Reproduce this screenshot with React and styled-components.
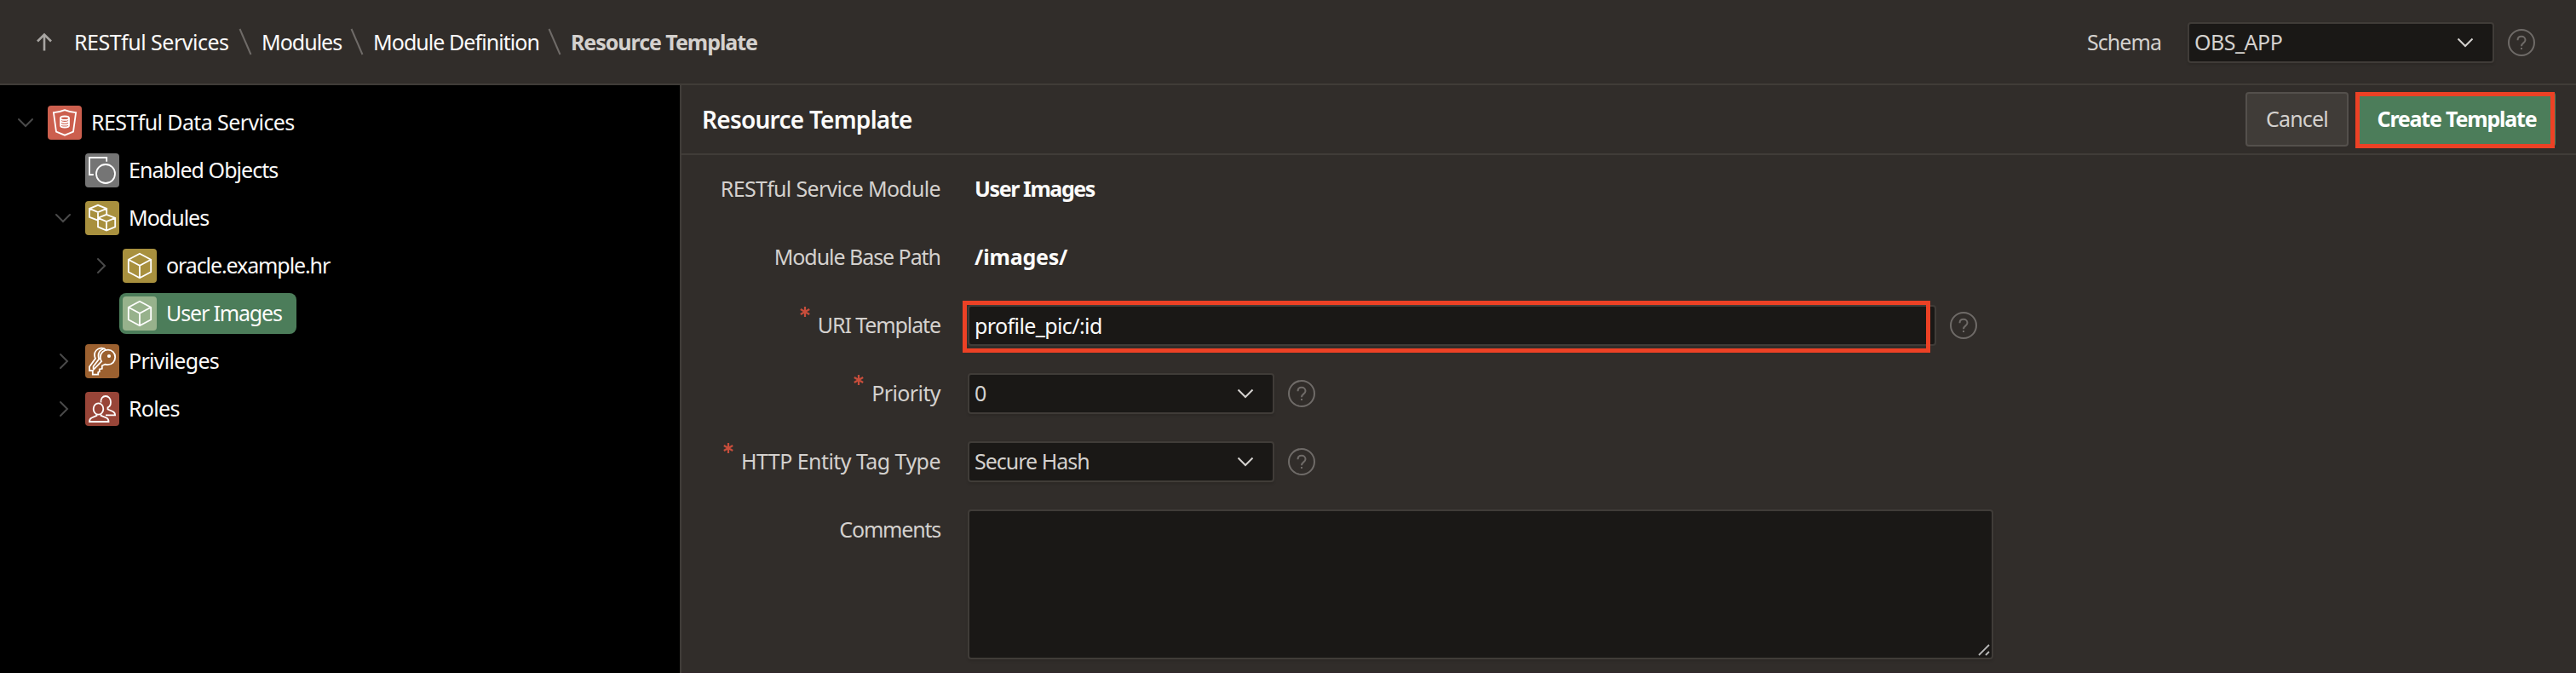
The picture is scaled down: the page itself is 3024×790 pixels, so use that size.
import React from "react";
import styled, { createGlobalStyle, css } from "styled-components";

const c = {
  bg: "#312d2a",
  line: "#403c38",
  field: "#1a1816",
  fieldLine: "#403c38",
  text: "#fcfbfa",
  muted: "#d4d1ce",
  dim: "#6f6b68",
  green: "#4c7d5a",
  red: "#ec4125",
};

const GlobalStyle = createGlobalStyle`
  * { box-sizing: border-box; }
  body {
    margin: 0;
    background: ${c.bg};
    color: ${c.text};
    font-family: "Noto Sans", "Open Sans", sans-serif;
    font-size: 25px;
    line-height: 40px;
  }
`;

const Page = styled.div`
  display: flex;
  flex-direction: column;
  width: 3024px;
  height: 790px;
  overflow: hidden;
`;

const TopBar = styled.header`
  display: flex;
  align-items: center;
  justify-content: space-between;
  flex: none;
  height: 100px;
  padding: 0 48px 0 40px;
  border-bottom: 2px solid ${c.line};
`;

const Crumbs = styled.nav`
  display: flex;
  align-items: center;
`;

const Text = styled.span`
  white-space: nowrap;
  letter-spacing: ${(p) => p.$ls || 0}px;
`;

const Crumb = styled(Text)`
  width: ${(p) => p.$w}px;
  ${(p) =>
    p.$current &&
    css`
      color: ${c.muted};
      font-weight: 700;
    `}
`;

const UpLink = styled.span`
  display: flex;
  width: 47px;
`;

const Separator = styled.svg`
  flex: none;
  width: 16px;
  height: 32px;
  margin: 0 11px;
`;

const SchemaPicker = styled.div`
  display: flex;
  align-items: center;
  padding-top: 2px;
`;

const SchemaLabel = styled(Text)`
  width: 118px;
  padding-bottom: 2px;
  color: ${c.muted};
`;

const SelectBox = styled.div`
  display: flex;
  align-items: center;
  justify-content: space-between;
  width: 360px;
  height: 48px;
  padding: 0 22px 0 6px;
  margin-right: 16px;
  color: ${c.muted};
  background: ${c.field};
  border: 2px solid ${c.fieldLine};
  border-radius: 4px;
  box-shadow: 0 2px 3px rgba(0, 0, 0, 0.12);

  ${Text} {
    padding-bottom: 2px;
  }
`;

const Body = styled.div`
  display: flex;
  flex: 1;
  min-height: 0;
`;

const Sidebar = styled.aside`
  flex: none;
  width: 800px;
  padding-top: 20px;
  background: #000;
  border-right: 2px solid ${c.line};
`;

const TreeRow = styled.div`
  display: flex;
  align-items: center;
  height: 48px;
  margin-bottom: 8px;
  padding-left: ${(p) => 8 + p.$level * 44}px;
`;

const Toggle = styled.span`
  display: flex;
  justify-content: center;
  width: 44px;
`;

const Node = styled.span`
  display: flex;
  align-items: center;
  height: 48px;
  padding: 0 17px 0 4px;
  border-radius: 8px;
  background: ${(p) => (p.$selected ? c.green : "transparent")};

  ${Text} {
    padding-bottom: 2px;
  }
`;

const Tile = styled.svg`
  width: 40px;
  height: 40px;
  margin-right: 11px;
  border-radius: 4px;
  background: ${(p) => p.$color};
  fill: none;
  stroke: #fff;
  stroke-width: 1.8;
`;

const Main = styled.main`
  flex: 1;
  border-bottom: 1px solid #31272a;
`;

const RegionHeader = styled.div`
  display: flex;
  align-items: center;
  justify-content: space-between;
  height: 82px;
  padding: 0 24px 0 24px;
  border-bottom: 2px solid ${c.line};
`;

const Title = styled.h1`
  margin: 0;
  font-size: 28px;
  font-weight: 600;
  letter-spacing: ${(p) => p.$ls}px;
`;

const Actions = styled.div`
  display: flex;
  align-items: center;
`;

const Button = styled.button`
  display: block;
  height: 64px;
  width: ${(p) => p.$w}px;
  padding: 0 0 2px;
  font: inherit;
  font-weight: ${(p) => (p.$hot ? 700 : 400)};
  letter-spacing: ${(p) => p.$ls}px;
  white-space: nowrap;
  color: ${(p) => (p.$hot ? "#fff" : c.muted)};
  background: ${(p) => (p.$hot ? c.green : "#403c38")};
  border: ${(p) => (p.$hot ? "0" : "2px solid #54504c")};
  border-radius: 4px;
`;

const Highlight = styled.div`
  position: absolute;
  inset: ${(p) => p.$inset};
  border: 5px solid ${c.red};
  pointer-events: none;
`;

const Marked = styled.div`
  position: relative;
  margin-left: ${(p) => p.$gap || 0}px;
  margin-right: ${(p) => p.$after || 0}px;
`;

const Form = styled.div`
  display: flex;
  flex-direction: column;
  gap: 32px;
  padding-top: 16px;
`;

const FormRow = styled.div`
  display: flex;
  align-items: center;
  height: ${(p) => p.$h || 48}px;
`;

const FieldLabel = styled(Text)`
  display: flex;
  align-self: flex-start;
  justify-content: flex-end;
  width: 304px;
  height: 48px;
  margin-right: 32px;
  line-height: 46px;
  color: ${c.muted};
`;

const Required = styled.svg`
  width: 14px;
  height: 14px;
  margin: 1px 8px 0 0;
  stroke: #c74d3b;
  stroke-width: 2.2;
`;

const Value = styled(Text)`
  padding: 0 0 2px 8px;
  font-weight: 700;
`;

const Input = styled.div`
  width: 1137px;
  height: 48px;
  padding-left: 6px;
  line-height: 44px;
  letter-spacing: ${(p) => p.$ls}px;
  background: ${c.field};
  border: 2px solid ${c.fieldLine};
  border-radius: 4px;
`;

const TextArea = styled.div`
  display: flex;
  align-items: flex-end;
  justify-content: flex-end;
  width: 1204px;
  height: 176px;
  padding: 2px;
  background: ${c.field};
  border: 2px solid ${c.fieldLine};
  border-radius: 4px;
  box-shadow: 0 2px 3px rgba(0, 0, 0, 0.12);
`;

const Slash = () => (
  <Separator viewBox="0 0 16 32">
    <path d="M1.5 1L14.5 31" stroke={c.dim} strokeWidth="2" />
  </Separator>
);

const Help = () => (
  <svg width="32" height="32" viewBox="0 0 32 32" fill="none" stroke={c.dim} strokeWidth="2">
    <circle cx="16" cy="16" r="15" />
    <path d="M11.5 13.2c0-2.800 2-4.400 4.500-4.400s4.500 1.600 4.500 4.200c0 3.500-4.500 3.300-4.500 7.200" />
    <path d="M16 22v2" />
  </svg>
);

const Chevron = () => (
  <svg width="20" height="12" viewBox="0 0 20 12" fill="none" stroke={c.muted} strokeWidth="2">
    <path d="M1.500 1.500L10 10l8.500-8.500" />
  </svg>
);

const TreeChevron = ({ open }) => (
  <svg width="20" height="20" viewBox="0 0 20 20" fill="none" stroke="#4a4a4a" strokeWidth="2" strokeLinecap="round">
    <path d={open ? "M2 6l8 8 8-8" : "M7 2l8 8-8 8"} />
  </svg>
);

const Select = ({ children, ls }) => (
  <SelectBox>
    <Text $ls={ls}>{children}</Text>
    <Chevron />
  </SelectBox>
);

const cube = "M20 5.700L33.200 12.700V27.300L20 34.300L6.800 27.300V12.700ZM6.800 12.700L20 19.800L33.200 12.700M20 19.800V34.300";

const icons = {
  rest: (
    <>
      <path d="M6.900 8.200C12 8 16 6.800 20 5.200c4 1.600 8 2.800 13.100 3L30 30.500l-10 4.200-10-4.200z" />
      <ellipse cx="20" cy="14.700" rx="5" ry="2.200" />
      <path d="M15 14.700v8.500c0 1.300 2.200 2.300 5 2.300s5-1 5-2.300v-8.500M15 17.600c0 1.300 2.200 2.200 5 2.200s5-.9 5-2.200M15 20.500c0 1.300 2.200 2.200 5 2.200s5-.9 5-2.200" />
    </>
  ),
  objects: (
    <>
      <path d="M9.800 25H5V5H25.200V9.800" />
      <circle cx="24" cy="24" r="11" />
    </>
  ),
  modules: (
    <>
      <path d="M14.800 22.600L5 18.800V8.800L15 4.800L25.200 8.800V15M5 8.800L15 13L25.200 8.800M15 13V19" />
      <path d="M25 15.800L35.200 19.800V30.300L25 34.600L15 30.300V19.800ZM15 19.800L25 24L35.200 19.800M25 24V34.600" />
    </>
  ),
  cube: <path d={cube} />,
  keys: (
    <>
      <path d="M26.800 6.700c4.800 0 8.400 3.500 8.400 8.500s-3.600 8.900-8.800 8.900c-1.200 0-2.200-.2-3.200-.5l-3.400 1.600v3.600l-3 .6v3l-1.600.6v2.600H8.800v-4.600l10.400-10.800c-1-1.400-1.400-3-1.400-4.900 0-5 4-8.600 9-8.600z" />
      <path d="M24.500 6.800C22.500 4.900 20.500 4.400 18.500 4.700 14 5.300 11 8.600 11 12.800c0 1.400.4 2.800 1 4L5 26.500V31h4M21.500 5.500c-3.500 1.200-6 4-6 8 0 1.600.3 2.800.8 3.900L9.600 26v3" />
      <circle cx="28" cy="14" r="1.200" fill="#fff" />
    </>
  ),
  people: (
    <>
      <path d="M18.500 12.500C18 8 20.500 5 24 5s6 3 6 7c0 3-1.500 5.500-3.500 6.300v2.200l6 2.500c1.600.8 2.600 2 2.600 4.300H24" />
      <ellipse cx="15.500" cy="20" rx="5.800" ry="6.700" />
      <path d="M13.500 26.300v1.500L7.500 30.500c-1.500.7-2.500 1.800-2.500 4.500h22.500c0-2.700-1-3.800-2.500-4.500l-6.500-2.700v-1.500" />
    </>
  ),
};

const tree = [
  { level: 0, toggle: "open", icon: "rest", color: "#cc5f4e", label: "RESTful Data Services", ls: -0.6 },
  { level: 1, icon: "objects", color: "#757575", label: "Enabled Objects", ls: -0.95 },
  { level: 1, toggle: "open", icon: "modules", color: "#a8903e", label: "Modules", ls: -1 },
  { level: 2, toggle: "closed", icon: "cube", color: "#a8903e", label: "oracle.example.hr", ls: -1.1 },
  { level: 2, icon: "cube", color: "#97b28c", label: "User Images", ls: -1.15, selected: true },
  { level: 1, toggle: "closed", icon: "keys", color: "#9c6130", label: "Privileges", ls: -0.7 },
  { level: 1, toggle: "closed", icon: "people", color: "#984538", label: "Roles", ls: -0.7 },
];

const Asterisk = () => (
  <Required viewBox="0 0 14 14">
    <path d="M7 1v12M1.800 4l10.400 6M1.800 10l10.400-6" />
  </Required>
);

export default function App() {
  return (
    <Page>
      <GlobalStyle />
      <TopBar>
        <Crumbs>
          <UpLink>
            <svg width="24" height="24" viewBox="0 0 24 24" fill="none" stroke="#a8a5a2" strokeWidth="2.600">
              <path d="M12 22.500V4M4 11.500L12 3.500l8 8" />
            </svg>
          </UpLink>
          <Crumb $w={182} $ls={-0.5}>RESTful Services</Crumb>
          <Slash />
          <Crumb $w={93} $ls={-1}>Modules</Crumb>
          <Slash />
          <Crumb $w={194} $ls={-0.95}>Module Definition</Crumb>
          <Slash />
          <Crumb $current $ls={-1.05}>Resource Template</Crumb>
        </Crumbs>
        <SchemaPicker>
          <SchemaLabel $ls={-0.95}>Schema</SchemaLabel>
          <Select ls={-0.5}>OBS_APP</Select>
          <Help />
        </SchemaPicker>
      </TopBar>
      <Body>
        <Sidebar>
          {tree.map((n) => (
            <TreeRow key={n.label} $level={n.level}>
              <Toggle>{n.toggle && <TreeChevron open={n.toggle === "open"} />}</Toggle>
              <Node $selected={n.selected}>
                <Tile viewBox="0 0 40 40" $color={n.color}>{icons[n.icon]}</Tile>
                <Text $ls={n.ls}>{n.label}</Text>
              </Node>
            </TreeRow>
          ))}
        </Sidebar>
        <Main>
          <RegionHeader>
            <Title $ls={-0.75}>Resource Template</Title>
            <Actions>
              <Button $w={121} $ls={-0.8}>Cancel</Button>
              <Marked $gap={11}>
                <Button $hot $w={232} $ls={-1.2}>Create Template</Button>
                <Highlight $inset="0 1px -2px -3px" />
              </Marked>
            </Actions>
          </RegionHeader>
          <Form>
            <FormRow>
              <FieldLabel $ls={-0.68}>RESTful Service Module</FieldLabel>
              <Value $ls={-1.4}>User Images</Value>
            </FormRow>
            <FormRow>
              <FieldLabel $ls={-1.05}>Module Base Path</FieldLabel>
              <Value $ls={-0.2}>/images/</Value>
            </FormRow>
            <FormRow>
              <FieldLabel $ls={-1.1}><Asterisk />URI Template</FieldLabel>
              <Marked $after={16}>
                <Input $ls={-0.6}>profile_pic/:id</Input>
                <Highlight $inset="-5px 7px -8px -6px" />
              </Marked>
              <Help />
            </FormRow>
            <FormRow>
              <FieldLabel $ls={-0.6}><Asterisk />Priority</FieldLabel>
              <Select ls={-0.5}>0</Select>
              <Help />
            </FormRow>
            <FormRow>
              <FieldLabel $ls={-0.55}><Asterisk />HTTP Entity Tag Type</FieldLabel>
              <Select ls={-1}>Secure Hash</Select>
              <Help />
            </FormRow>
            <FormRow $h={176}>
              <FieldLabel $ls={-1.2}>Comments</FieldLabel>
              <TextArea>
                <svg width="14" height="14" viewBox="0 0 14 14" stroke="#b9b9b9" strokeWidth="1.800">
                  <path d="M1 13L13 1M9 13l4-4" />
                </svg>
              </TextArea>
            </FormRow>
          </Form>
        </Main>
      </Body>
    </Page>
  );
}
